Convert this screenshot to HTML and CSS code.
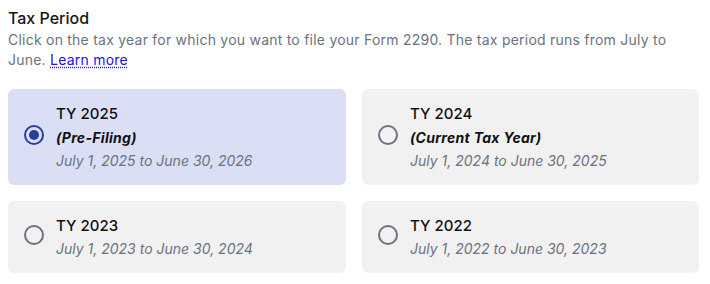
FILE: index.html
```html
<!DOCTYPE html>
<html lang="en">
<head>
<meta charset="utf-8">
<title>Tax Period</title>
<link rel="stylesheet" href="styles.css">
</head>
<body>
<section class="tax-period">
  <h2 class="title">Tax Period</h2>
  <p class="desc">Click on the tax year for which you want to file your Form 2290. The tax period runs from July to June. <a href="#" class="learn">Learn more</a></p>
  <div class="options">
    <label class="option selected">
      <span class="radio"><span class="dot"></span></span>
      <span class="info">
        <span class="year">TY 2025</span>
        <span class="tag">(Pre-Filing)</span>
        <span class="range">July 1, 2025 to June 30, 2026</span>
      </span>
    </label>
    <label class="option">
      <span class="radio"></span>
      <span class="info">
        <span class="year">TY 2024</span>
        <span class="tag">(Current Tax Year)</span>
        <span class="range">July 1, 2024 to June 30, 2025</span>
      </span>
    </label>
    <label class="option">
      <span class="radio"></span>
      <span class="info">
        <span class="year">TY 2023</span>
        <span class="range">July 1, 2023 to June 30, 2024</span>
      </span>
    </label>
    <label class="option">
      <span class="radio"></span>
      <span class="info">
        <span class="year">TY 2022</span>
        <span class="range">July 1, 2022 to June 30, 2023</span>
      </span>
    </label>
  </div>
</section>
</body>
</html>
```
FILE: styles.css
```css
body {
  margin: 8px;
  font-family: Inter, "Open Sans", sans-serif;
  color: #111;
  background: #fff;
}
.tax-period {
  width: 691px;
}
.title {
  margin: 0;
  font-size: 16px;
  font-weight: 500;
  line-height: 20px;
  color: #161616;
}
.desc {
  margin: 2px 0 0;
  font-size: 14px;
  line-height: 20px;
  color: #6b7280;
  letter-spacing: 0.23px;
  width: 670px;
}
.learn {
  color: #1a10e8;
  text-decoration: underline dotted;
  text-underline-offset: 2px;
}
.options {
  margin-top: 19px;
  display: grid;
  grid-template-columns: 338px 337px;
  column-gap: 16px;
  row-gap: 16px;
}
.option {
  display: flex;
  align-items: center;
  gap: 12px;
  padding: 13px 16px;
  background: #f1f1f1;
  border-radius: 6px;
  cursor: pointer;
}
.option.selected {
  background: #dadff6;
}
.radio {
  flex: none;
  box-sizing: border-box;
  width: 20px;
  height: 20px;
  border: 2px solid #6b7280;
  border-radius: 50%;
  display: flex;
  align-items: center;
  justify-content: center;
  margin-top: -4px;
}
.selected .radio {
  border-color: #263f9c;
}
.dot {
  width: 10px;
  height: 10px;
  border-radius: 50%;
  background: #263f9c;
}
.info {
  display: flex;
  flex-direction: column;
}
.year {
  font-size: 15px;
  font-weight: 500;
  line-height: 24px;
  color: #111;
}
.tag {
  font-size: 14px;
  font-weight: 700;
  font-style: italic;
  line-height: 24px;
  letter-spacing: 0.3px;
  color: #111;
}
.range {
  font-size: 14px;
  font-style: italic;
  line-height: 22px;
  color: #6b7280;
}
```
